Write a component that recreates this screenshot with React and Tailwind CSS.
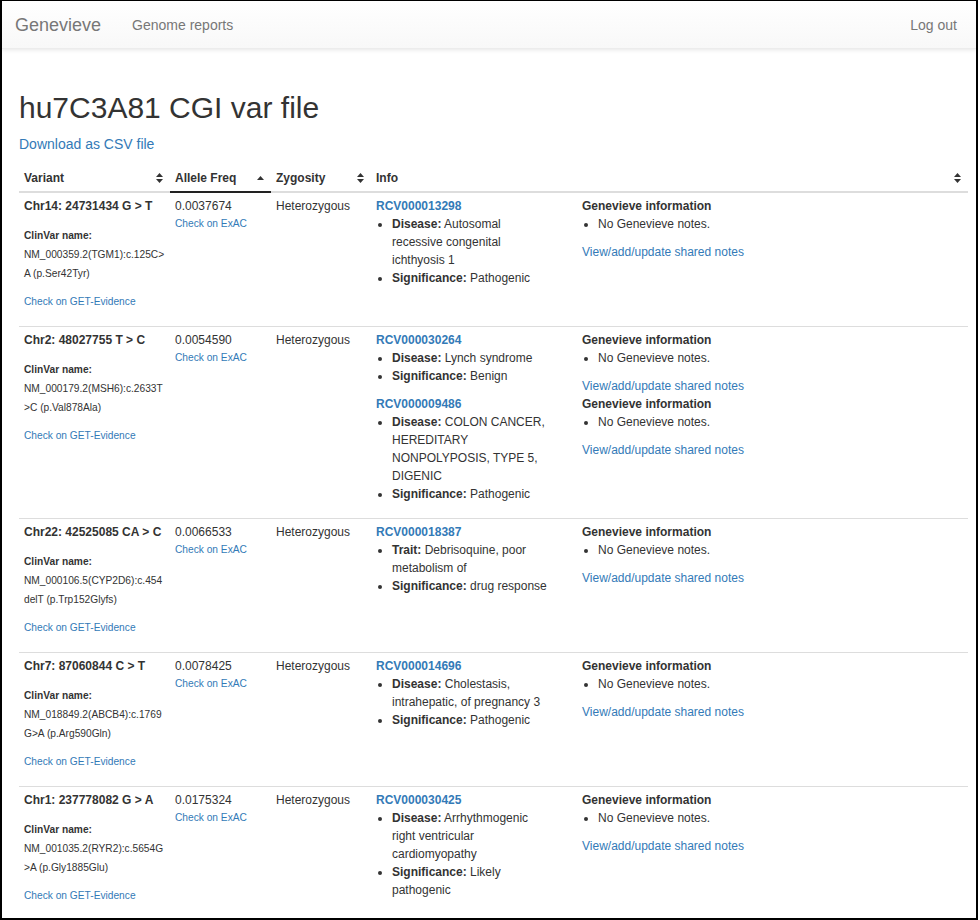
import React from "react";

const variants = [
  {
    pos: "Chr14: 24731434 G > T",
    clinvar: "NM_000359.2(TGM1):c.125C>A (p.Ser42Tyr)",
    freq: "0.0037674",
    zyg: "Heterozygous",
    records: [
      { rcv: "RCV000013298", label: "Disease", name: "Autosomal recessive congenital ichthyosis 1", sig: "Pathogenic" },
    ],
  },
  {
    pos: "Chr2: 48027755 T > C",
    clinvar: "NM_000179.2(MSH6):c.2633T>C (p.Val878Ala)",
    freq: "0.0054590",
    zyg: "Heterozygous",
    records: [
      { rcv: "RCV000030264", label: "Disease", name: "Lynch syndrome", sig: "Benign" },
      { rcv: "RCV000009486", label: "Disease", name: "COLON CANCER, HEREDITARY NONPOLYPOSIS, TYPE 5, DIGENIC", sig: "Pathogenic" },
    ],
  },
  {
    pos: "Chr22: 42525085 CA > C",
    clinvar: "NM_000106.5(CYP2D6):c.454delT (p.Trp152Glyfs)",
    freq: "0.0066533",
    zyg: "Heterozygous",
    records: [
      { rcv: "RCV000018387", label: "Trait", name: "Debrisoquine, poor metabolism of", sig: "drug response" },
    ],
  },
  {
    pos: "Chr7: 87060844 C > T",
    clinvar: "NM_018849.2(ABCB4):c.1769G>A (p.Arg590Gln)",
    freq: "0.0078425",
    zyg: "Heterozygous",
    records: [
      { rcv: "RCV000014696", label: "Disease", name: "Cholestasis, intrahepatic, of pregnancy 3", sig: "Pathogenic" },
    ],
  },
  {
    pos: "Chr1: 237778082 G > A",
    clinvar: "NM_001035.2(RYR2):c.5654G>A (p.Gly1885Glu)",
    freq: "0.0175324",
    zyg: "Heterozygous",
    records: [
      { rcv: "RCV000030425", label: "Disease", name: "Arrhythmogenic right ventricular cardiomyopathy", sig: "Likely pathogenic" },
    ],
  },
];

function SortBoth() {
  return (
    <svg width="7" height="10" viewBox="0 0 7 10" className="shrink-0">
      <path d="M0 4 L3.5 0 L7 4 Z" fill="#333" />
      <path d="M0 6 L3.5 10 L7 6 Z" fill="#333" />
    </svg>
  );
}

function SortUp() {
  return (
    <svg width="7" height="4" viewBox="0 0 7 4" className="shrink-0">
      <path d="M0 4 L3.5 0 L7 4 Z" fill="#333" />
    </svg>
  );
}

function Record({ r }) {
  return (
    <div className="flex">
      <div className="w-[206px] shrink-0 pr-[31px]">
        <a className="block font-bold text-[#337ab7]">{r.rcv}</a>
        <ul className="list-disc pl-[16px] mb-[10px]">
          <li>
            <b>{r.label}:</b> {r.name}
          </li>
          <li>
            <b>Significance:</b> {r.sig}
          </li>
        </ul>
      </div>
      <div className="flex-1">
        <div className="font-bold">Genevieve information</div>
        <ul className="list-disc pl-[16px] mb-[10px]">
          <li>No Genevieve notes.</li>
        </ul>
        <a className="block text-[#337ab7]">View/add/update shared notes</a>
      </div>
    </div>
  );
}

export default function App() {
  return (
    <div className="w-[978px] h-[920px] overflow-hidden bg-white border-l-2 border-r-2 border-t border-b-2 border-black font-['Liberation_Sans',Arial,sans-serif] text-[#333]">
      {/* navbar */}
      <nav className="h-[48px] flex items-center justify-between pl-[13px] pr-[19px] bg-linear-to-b from-white to-[#f8f8f8] shadow-[0_1px_4px_rgba(0,0,0,0.1)] border-b border-[#ececec]">
        <div className="flex items-center">
          <span className="text-[18px] leading-[20px] text-[#777]">Genevieve</span>
          <span className="ml-[31px] text-[14px] leading-[20px] text-[#777]">Genome reports</span>
        </div>
        <span className="text-[14px] leading-[20px] text-[#777]">Log out</span>
      </nav>

      <main className="pl-[17px] pr-[9px]">
        <h1 className="mt-[42px] text-[30px] leading-[33px] font-normal">hu7C3A81 CGI var file</h1>
        <a className="block mt-[10px] text-[14px] leading-[20px] text-[#337ab7]">Download as CSV file</a>

        <table className="mt-[11px] w-[949px] table-fixed border-collapse text-[12px] leading-[18px]">
          <colgroup>
            <col className="w-[151px]" />
            <col className="w-[101px]" />
            <col className="w-[100px]" />
            <col />
          </colgroup>
          <thead>
            <tr>
              <th className="pt-[4px] pb-[4px] px-[5px] text-left font-bold border-b-2 border-[#ddd]">
                <div className="flex items-center justify-between pr-[2px]">
                  <span>Variant</span>
                  <SortBoth />
                </div>
              </th>
              <th className="pt-[4px] pb-[4px] px-[5px] text-left font-bold border-b-2 border-[#222]">
                <div className="flex items-center justify-between pr-[2px]">
                  <span>Allele Freq</span>
                  <SortUp />
                </div>
              </th>
              <th className="pt-[4px] pb-[4px] px-[5px] text-left font-bold border-b-2 border-[#ddd]">
                <div className="flex items-center justify-between pr-[2px]">
                  <span>Zygosity</span>
                  <SortBoth />
                </div>
              </th>
              <th className="pt-[4px] pb-[4px] px-[5px] text-left font-bold border-b-2 border-[#ddd]">
                <div className="flex items-center justify-between pr-[2px]">
                  <span>Info</span>
                  <SortBoth />
                </div>
              </th>
            </tr>
          </thead>
          <tbody>
            {variants.map((v) => (
              <tr key={v.pos} className="align-top border-b border-[#ddd]">
                <td className="pt-[4px] pb-[5px] px-[5px]">
                  <div className="font-bold">{v.pos}</div>
                  <div className="mt-[12px] text-[10.2px] font-bold">ClinVar name:</div>
                  <div className="text-[10.2px] leading-[19px] break-all">{v.clinvar}</div>
                  <a className="block mt-[10px] mb-[10px] text-[10.2px] text-[#337ab7]">Check on GET-Evidence</a>
                </td>
                <td className="pt-[4px] pb-[5px] px-[5px]">
                  <div>{v.freq}</div>
                  <a className="block text-[10.2px] text-[#337ab7]">Check on ExAC</a>
                </td>
                <td className="pt-[4px] pb-[5px] px-[5px]">{v.zyg}</td>
                <td className="pt-[4px] pb-[5px] px-[5px]">
                  {v.records.map((r) => (
                    <Record key={r.rcv} r={r} />
                  ))}
                </td>
              </tr>
            ))}
          </tbody>
        </table>
      </main>
    </div>
  );
}
